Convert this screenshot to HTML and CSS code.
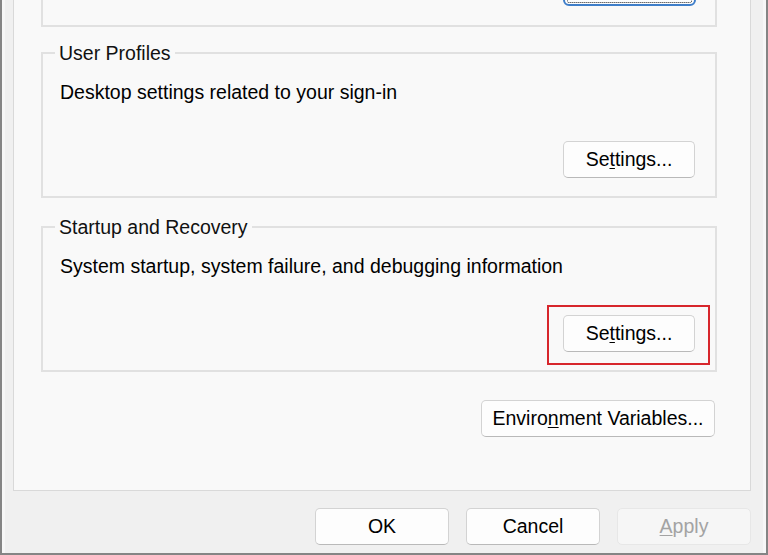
FILE: index.html
```html
<!DOCTYPE html>
<html lang="en">
<head>
<meta charset="utf-8">
<title>System Properties - Advanced</title>
<link rel="stylesheet" href="styles.css">
</head>
<body>
<div class="window">
  <div class="panel">
    <div class="group-top">
      <button class="btn btn-focus" type="button">Settings...</button>
    </div>

    <fieldset class="group">
      <legend class="group-label">User Profiles</legend>
      <p class="group-desc">Desktop settings related to your sign-in</p>
      <div class="group-actions">
        <button class="btn btn-group" type="button">Se<u>t</u>tings...</button>
      </div>
    </fieldset>

    <fieldset class="group group-startup">
      <legend class="group-label">Startup and Recovery</legend>
      <p class="group-desc">System startup, system failure, and debugging information</p>
      <div class="group-actions">
        <button class="btn btn-group btn-highlight" type="button">Se<u>t</u>tings...</button>
      </div>
    </fieldset>

    <div class="env-row">
      <button class="btn btn-env" type="button">Enviro<u>n</u>ment Variables...</button>
    </div>
  </div>

  <div class="footer">
    <button class="btn btn-footer" type="button">OK</button>
    <button class="btn btn-footer" type="button">Cancel</button>
    <button class="btn btn-footer btn-disabled" type="button"><u>A</u>pply</button>
  </div>
</div>
</body>
</html>
```

FILE: styles.css
```css
html, body {
  margin: 0;
  padding: 0;
  background: #f0f0f0;
}

body {
  width: 768px;
  height: 555px;
  overflow: hidden;
  font-family: "Liberation Sans", Arial, sans-serif;
  font-size: 19.5px;
  color: #000;
}

.window {
  box-sizing: border-box;
  width: 768px;
  height: 555px;
  background: #f0f0f0;
  border-left: 2px solid #858585;
  border-right: 2px solid #858585;
  border-bottom: 2px solid #858585;
  box-shadow: inset 3px 0 0 #f7f7f7, inset -3px 0 0 #f7f7f7;
  padding: 0 15px 0 11px;
  display: flex;
  flex-direction: column;
}

.panel {
  box-sizing: border-box;
  height: 491px;
  background: #f9f9f9;
  border: 1px solid #d9d9d9;
  border-top: none;
  padding: 0 33px 0 27px;
  display: flex;
  flex-direction: column;
}

.group-top {
  box-sizing: border-box;
  height: 27px;
  border: 2px solid #e1e1e1;
  border-top: none;
  display: flex;
  justify-content: flex-end;
  padding-right: 19px;
}

.group {
  margin: 0;
  padding: 0;
  min-width: 0;
  border: 2px solid #e1e1e1;
  margin-top: 14px;
}

.group-startup {
  margin-top: 17px;
}

.group-label {
  margin-left: 12px;
  padding: 0 4px;
  line-height: 24px;
  color: #111;
}

.group-desc {
  margin: 15px 0 0 17px;
  line-height: 24px;
}

.group-actions {
  display: flex;
  justify-content: flex-end;
  margin-top: 37px;
  padding: 0 20px 18px 0;
}

.btn {
  box-sizing: border-box;
  height: 37px;
  font-family: "Liberation Sans", Arial, sans-serif;
  font-size: 19.5px;
  color: #000;
  background: #fdfdfd;
  border: 1px solid #d3d3d3;
  border-bottom-color: #b9b9b9;
  border-radius: 5px;
  padding: 0;
  line-height: 35px;
  text-align: center;
}

.btn u {
  text-underline-offset: 2px;
}

.btn-group {
  width: 132px;
}

.btn-focus {
  position: relative;
  width: 133px;
  margin-top: -31px;
  border: 2px solid #3f7ec9;
  border-radius: 6px;
}

.btn-focus::before {
  content: "";
  position: absolute;
  left: 2px;
  right: 2px;
  top: 2px;
  bottom: 1px;
  border: 1px dotted #222;
  border-radius: 2px;
}

.btn-highlight {
  position: relative;
}

.btn-highlight::after {
  content: "";
  position: absolute;
  top: -11px;
  left: -17px;
  right: -16px;
  bottom: -14px;
  border: 2px solid #d7262c;
}

.env-row {
  display: flex;
  justify-content: flex-end;
  margin-top: 28px;
  padding-right: 2px;
}

.btn-env {
  width: 234px;
}

.footer {
  display: flex;
  justify-content: flex-end;
  gap: 17px;
  margin-top: 17px;
}

.btn-footer {
  width: 134px;
}

.btn-disabled {
  background: #f6f6f6;
  border-color: #e7e7e7;
  color: #a3a3a3;
}
```
